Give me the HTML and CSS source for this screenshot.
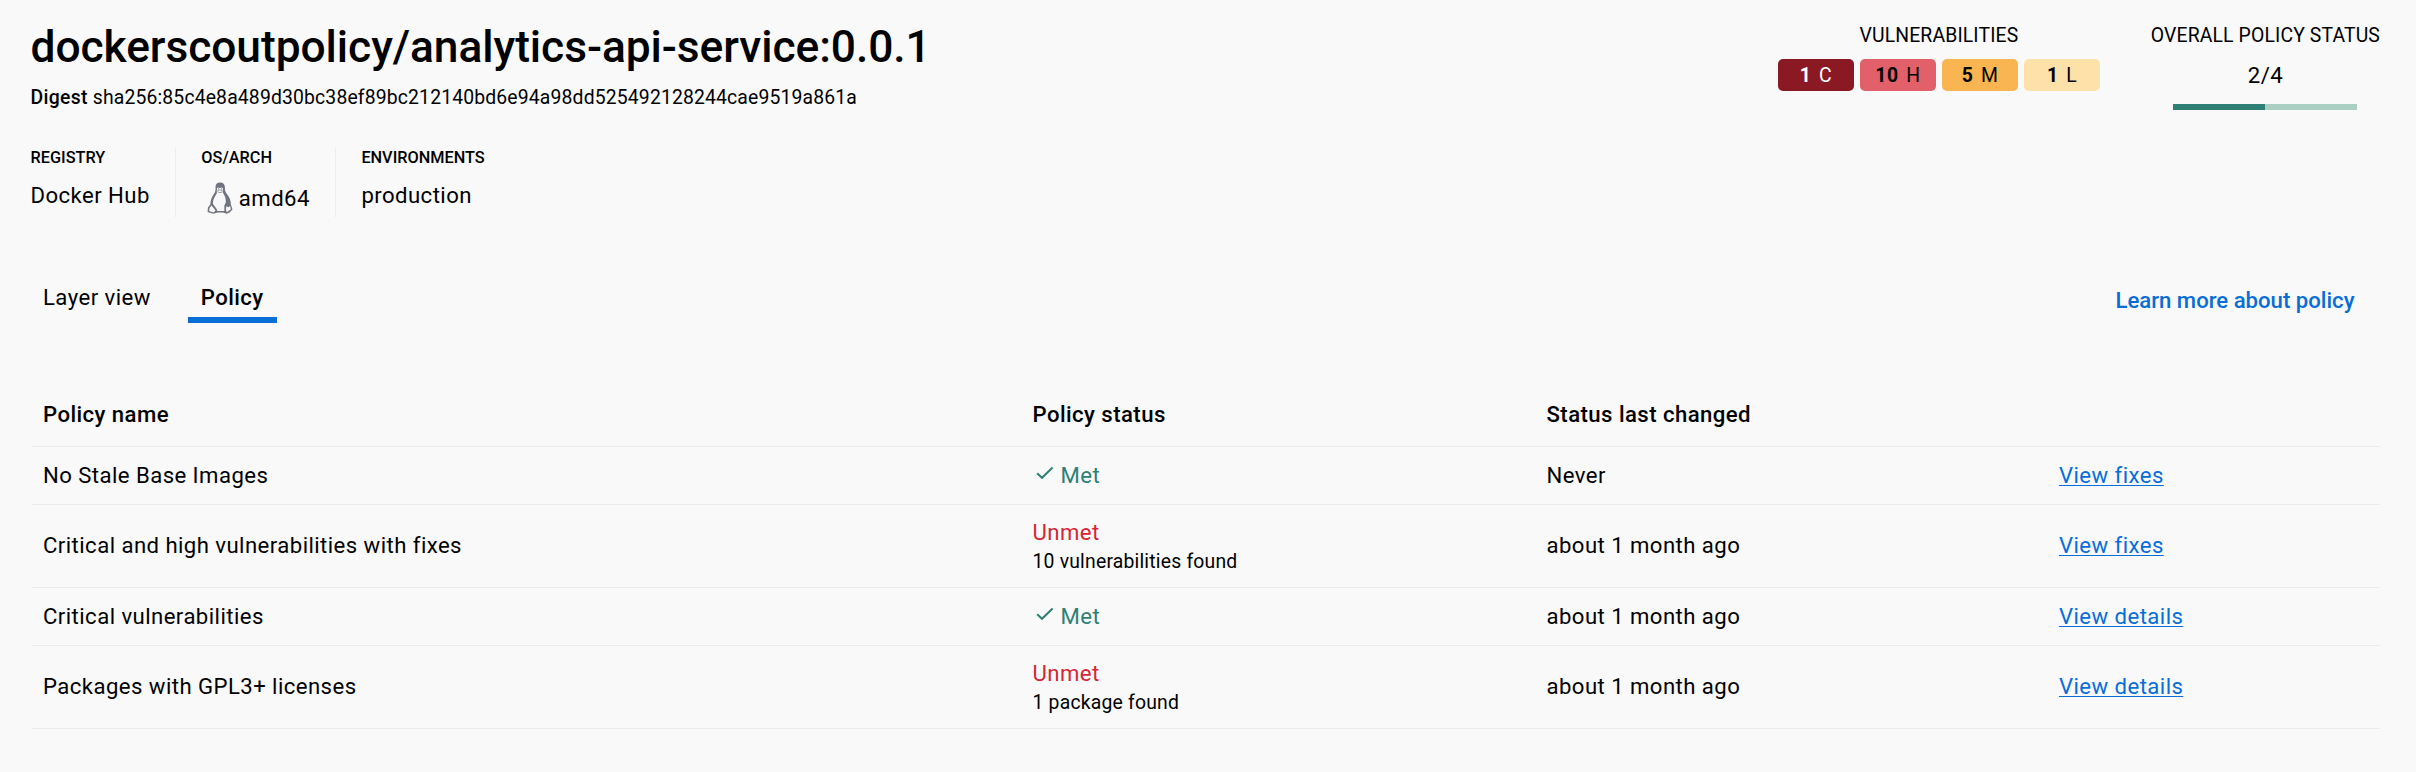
FILE: index.html
```html
<!DOCTYPE html>
<html lang="en">
<head>
<meta charset="utf-8">
<title>dockerscoutpolicy/analytics-api-service:0.0.1</title>
<link rel="stylesheet" href="styles.css">
</head>
<body>
<header class="header">
  <div class="image-info">
    <h1 class="title">dockerscoutpolicy/analytics-api-service:0.0.1</h1>
    <p class="digest"><b>Digest</b> sha256:85c4e8a489d30bc38ef89bc212140bd6e94a98dd525492128244cae9519a861a</p>
    <dl class="facts">
      <div class="fact"><dt>REGISTRY</dt><dd>Docker Hub</dd></div>
      <div class="fact"><dt>OS/ARCH</dt><dd class="arch">
        <svg class="tux" viewBox="0 0 26 32" aria-hidden="true">
          <path class="tux-body" d="M13 .5C10 .5 8.400 2.300 8.500 5.300C8.700 9 8.300 10 6.300 13C4.500 15.800 3.500 18.500 3.300 22.500L.9 25.600L.6 30L6.500 31.800L10.500 30.600H16L19.500 31.800L22.500 30.500L25.500 27.400L23.900 22.500C23.800 18.600 22.600 15.600 20.300 12.600C18.300 10 17.900 8.600 17.900 5.600C18 2.300 16.300.5 13 .5Z"/>
          <path class="tux-light" d="M9.900 6.400Q11 4.800 12.700 6.300Q14.600 4.800 16 6.400L15.800 10.400Q19.200 15.500 18.800 20.500L17.300 23.500L17.400 29H10.300L9.500 26.800L6 22Q5.400 17.300 9.800 11.400Z"/>
          <path class="tux-light" d="M4.500 23.500L8.600 28.600L6.600 30.400L2.200 29L2.400 26.200ZM19.200 24.300L21.400 25.200L23.100 24.100L23.900 27.200L20.200 30.100L19 29.100Z"/>
          <path class="tux-face" d="M10.400 8.700L12.800 7.800L15.500 8.700M10.600 9.800Q13 11.500 15.500 9.800"/>
          <circle class="tux-body" cx="11.300" cy="6.900" r=".6"/><circle class="tux-body" cx="14.600" cy="6.900" r=".6"/>
        </svg>amd64</dd></div>
      <div class="fact"><dt>ENVIRONMENTS</dt><dd>production</dd></div>
    </dl>
  </div>
  <div class="summary">
    <section class="vulns">
      <h2 class="summary-label">VULNERABILITIES</h2>
      <div class="badges">
        <span class="badge critical"><b>1</b> C</span>
        <span class="badge high"><b>10</b> H</span>
        <span class="badge medium"><b>5</b> M</span>
        <span class="badge low"><b>1</b> L</span>
      </div>
    </section>
    <section class="overall">
      <h2 class="summary-label">OVERALL POLICY STATUS</h2>
      <div class="score">2/4</div>
      <div class="meter"><div class="meter-fill" style="width:50%"></div></div>
    </section>
  </div>
</header>
<nav class="tabs">
  <a class="tab">Layer view</a>
  <a class="tab active">Policy</a>
  <a class="learn">Learn more about policy</a>
</nav>
<main class="table">
  <div class="row head"><div>Policy name</div><div>Policy status</div><div>Status last changed</div><div></div></div>
  <div class="row">
    <div>No Stale Base Images</div>
    <div class="met"><svg class="check" viewBox="0 0 18 14" aria-hidden="true"><path d="M1.200 7.200L6 11.800L16.600 1.500"/></svg>Met</div>
    <div>Never</div><div><a class="link">View fixes</a></div>
  </div>
  <div class="row tall">
    <div>Critical and high vulnerabilities with fixes</div>
    <div><div class="unmet">Unmet</div><div class="note">10 vulnerabilities found</div></div>
    <div>about 1 month ago</div><div><a class="link">View fixes</a></div>
  </div>
  <div class="row">
    <div>Critical vulnerabilities</div>
    <div class="met"><svg class="check" viewBox="0 0 18 14" aria-hidden="true"><path d="M1.200 7.200L6 11.800L16.600 1.500"/></svg>Met</div>
    <div>about 1 month ago</div><div><a class="link">View details</a></div>
  </div>
  <div class="row tall">
    <div>Packages with GPL3+ licenses</div>
    <div><div class="unmet">Unmet</div><div class="note">1 package found</div></div>
    <div>about 1 month ago</div><div><a class="link">View details</a></div>
  </div>
</main>
</body>
</html>
```
FILE: styles.css
```css
* { box-sizing: border-box; }
body {
  margin: 0;
  height: 772px;
  padding: 0 36px 0 30px;
  overflow: hidden;
  background: #f9f9f9;
  color: #000;
  font: 22.15px/30px Roboto, "Liberation Sans", sans-serif;
  letter-spacing: 0.44px;
}
h1, h2, p, dl, dd { margin: 0; font-weight: 400; }
b { font-weight: 500; }

.header { display: flex; justify-content: space-between; height: 269px; }
.image-info { padding: 19px 0 0 0.5px; }
.title { font-size: 44.3px; font-weight: 500; line-height: 56px; letter-spacing: -0.05px; }
.digest { margin-top: 9px; font-size: 19.38px; line-height: 28px; letter-spacing: 0.15px; }
.digest b { letter-spacing: 0.33px; }

.facts { display: flex; margin: 36px 0 0; height: 69px; }
.fact { padding: 0 25.5px 0 25px; border-left: 1px solid #ededed; }
.fact:first-child { padding-left: 0; border-left: 0; }
.fact dt { font-size: 16.3px; font-weight: 500; line-height: 20px; letter-spacing: 0; }
.fact dd { margin-top: 12px; }
.fact .arch { display: flex; margin-top: 15px; }
.tux { width: 26px; height: 32px; margin: -1px 6px 0 5.5px; }
.tux-body { fill: #71737f; }
.tux-light { fill: #f8f8fb; }
.tux-face { fill: none; stroke: #9a9ca6; stroke-width: 1; }

.summary { display: flex; gap: 51px; padding-top: 23px; }
.summary-label { font-size: 19.38px; line-height: 26px; letter-spacing: 0.14px; text-align: center; }
.badges { display: flex; gap: 6.600px; margin-top: 10px; }
.badge {
  width: 75.500px;
  height: 32px;
  border-radius: 5px;
  font-size: 19.38px;
  line-height: 33px;
  text-align: center;
  word-spacing: 2.5px;
}
.badge b { font-weight: 700; }
.critical { background: #8b1924; color: #fff; }
.high { background: #e1606a; }
.medium { background: #f9b552; }
.low { background: #fde1a9; }
.score { margin-top: 11px; text-align: center; }
.meter { width: 184px; height: 6px; margin: 14px auto 0; background: #aacfc3; }
.meter-fill { height: 100%; background: #2e7f74; }

.tabs { display: flex; padding: 0 25.5px 0 0; height: 100px; }
.tab { height: 54px; padding: 13px 13px 0; margin-right: 24px; }
.tab.active { font-weight: 500; border-bottom: 6px solid #086dd7; }
.learn { margin-left: auto; padding-top: 16px; font-weight: 500; letter-spacing: 0; color: #086dd7; }

.table { margin-left: 2px; }
.row {
  display: grid;
  grid-template-columns: 989.500px 514px 512.500px 1fr;
  align-items: center;
  height: 58px;
  padding: 0 0 2px 11px;
  border-bottom: 1px solid #ececec;
}
.row.head { height: 78px; padding-top: 13px; padding-bottom: 0; font-weight: 500; }
.row.tall { height: 83px; }
.met { display: flex; align-items: center; color: #2e7f74; }
.check { width: 18px; height: 14px; margin: -4px 7px 0 3px; fill: none; stroke: #2e7f74; stroke-width: 2; }
.unmet { margin-top: 4px; color: #d52536; line-height: 28px; }
.note { margin-top: 2px; font-size: 19.38px; line-height: 28px; letter-spacing: 0.2px; }
.link { color: #086dd7; text-decoration: underline; text-decoration-thickness: 1.400px; text-underline-offset: 2px; text-decoration-skip-ink: none; }
```
